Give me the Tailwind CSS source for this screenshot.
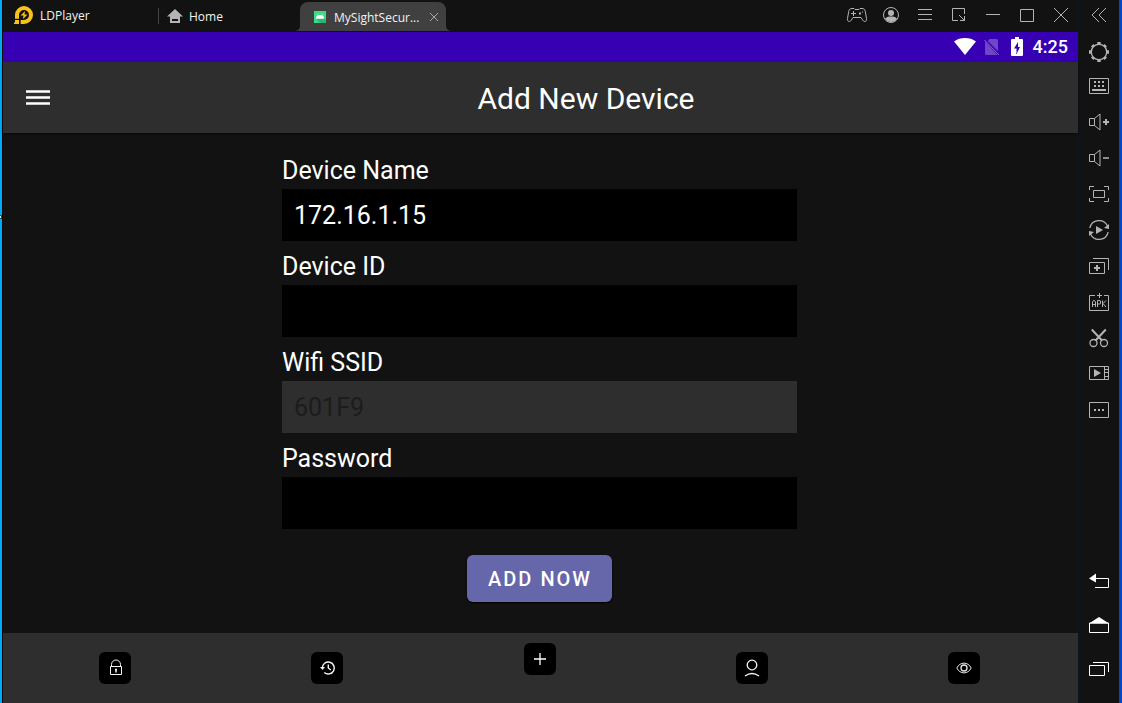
<!DOCTYPE html>
<html lang="en">
<head>
<meta charset="utf-8">
<meta name="viewport" content="width=device-width, initial-scale=1">
<title>LDPlayer</title>
<script src="https://cdn.jsdelivr.net/npm/@tailwindcss/browser@4"></script>
</head>
<body class="flex min-h-screen bg-[#121212] font-['Roboto',sans-serif] text-white">
  <!-- window edge -->
  <div class="relative w-[3px] shrink-0 border-r border-[#0a0a0a] bg-[#00aaf8]">
    <span class="absolute left-0 top-[215px] h-1 w-0.5 bg-[#0a4a6a]"></span>
    <span class="absolute left-0 top-[216px] h-0.5 w-px bg-[#fffbd0]"></span>
  </div>

  <div class="flex min-w-0 flex-1 flex-col">
    <!-- emulator title bar -->
    <header class="flex h-8 shrink-0 bg-[#121212] font-['Open_Sans',sans-serif] text-xs text-[#f2f2f2]">
      <div class="flex w-[155px] items-center gap-1.5 pl-[11px]">
        <svg class="size-5" viewBox="0 0 20 20" aria-hidden="true">
          <path d="M1 14V9a9 9 0 1 1 9 9H6.500v-4H10a5 5 0 1 0-5-5v4H1z" fill="#f9c11c"/>
          <path d="M0 16.500h5V18H0zM1 14h4v4H1z" fill="#f9c11c"/>
          <path d="M1 13.300h4M5.700 13v5" stroke="#121212" stroke-width="1.200"/>
          <path d="M11 5 6.500 9.500h3L9 13l4.500-4.500h-3z" fill="#f9c11c"/>
        </svg>
        <span>LDPlayer</span>
      </div>
      <div class="my-auto h-4 w-px bg-[#444]"></div>
      <button type="button" class="flex w-[138px] items-center gap-1.5 pl-2">
        <svg class="h-4 w-4" viewBox="0 0 16 16" aria-hidden="true"><path fill-rule="evenodd" d="M8 1 0 8.500h3V15h10V8.500h3zM5 11h6v2H5z" fill="#b4b4b4"/></svg>
        <span class="pt-0.5">Home</span>
      </button>
      <div class="relative mt-0.5 mb-px ml-[3px] flex w-[146px] items-center gap-2 rounded-t-lg bg-[#404040] pl-3.5">
        <svg class="absolute -left-[5px] bottom-0 h-[5px] w-[5px]" viewBox="0 0 5 5" aria-hidden="true"><path d="M0 5a5 5 0 0 0 5-5v5z" fill="#404040"/></svg>
        <svg class="absolute -right-[5px] bottom-0 h-[5px] w-[5px]" viewBox="0 0 5 5" aria-hidden="true"><path d="M5 5a5 5 0 0 1-5-5v5z" fill="#404040"/></svg>
        <svg class="size-3 shrink-0" viewBox="0 0 12 12" aria-hidden="true"><path d="M0 0h12v12H0z" fill="#3ddc84"/><path d="m2 7.500 4 4.500h6V9L9.500 6z" fill="#2fb56c"/><path d="M2.200 7.500a3.800 3.500 0 0 1 7.600 0zM3.500 3.500l.8 1.200M8.500 3.500l-.8 1.200" fill="#fff" stroke="#fff" stroke-width=".5"/></svg>
        <span class="w-[90px] pt-0.5 whitespace-nowrap">MySightSecur...</span>
        <button type="button" aria-label="Close tab" class="-ml-1"><svg class="size-3" viewBox="0 0 12 12"><path d="m2 2 8 8M10 2l-8 8" stroke="#a8a8a8"/></svg></button>
      </div>
      <nav class="ml-auto flex" aria-label="Window controls">
        <button type="button" aria-label="Gamepad" class="flex w-[34px] items-center justify-center"><svg class="size-6" viewBox="0 0 24 24" fill="none" stroke="#b4b4b4"><path d="M7 4.500h2l1 1h4l1-1h2c2 0 3 1 3.300 3l1.200 7c.3 2-.5 3-1.700 3-1 0-1.600-.6-2.300-1.700L16 13.500H8l-1.500 2.300c-.7 1.100-1.300 1.700-2.300 1.700-1.200 0-2-1-1.700-3l1.200-7c.3-2 1.300-3 3.300-3z"/><path d="M6 9.500h5M8.500 7v5"/><path d="M14 8.500h2v2h-2zM17 7.500h1v1h-1z" stroke="none" fill="#b4b4b4"/></svg></button>
        <button type="button" aria-label="Account" class="flex w-[34px] items-center justify-center"><svg class="size-6" viewBox="0 0 24 24"><circle cx="12" cy="11" r="7.500" fill="none" stroke="#b4b4b4"/><circle cx="12" cy="9" r="3" fill="#b4b4b4"/><path d="M6 15c1-2 3-2.500 6-2.500s5 .5 6 2.500c-1.500 2-3.500 3-6 3s-4.500-1-6-3z" fill="#b4b4b4"/></svg></button>
        <button type="button" aria-label="Menu" class="flex w-[34px] items-center justify-center"><svg class="size-6" viewBox="0 0 24 24"><path d="M5 5.500h14M5 10.500h14M5 15.500h14" stroke="#b4b4b4"/></svg></button>
        <button type="button" aria-label="Resize" class="flex w-[34px] items-center justify-center"><svg class="size-6" viewBox="0 0 24 24" fill="none" stroke="#b4b4b4"><path d="M17.500 10V4.500h-12v12H11M12 11l5.500 5.500M13 16.500h4.500V12"/></svg></button>
        <button type="button" aria-label="Minimize" class="flex w-[34px] items-center justify-center"><svg class="size-6" viewBox="0 0 24 24"><path d="M5 10.500h14" stroke="#b4b4b4"/></svg></button>
        <button type="button" aria-label="Maximize" class="flex w-[34px] items-center justify-center"><svg class="size-6" viewBox="0 0 24 24"><path d="M5.500 5.500h13v12h-13z" fill="none" stroke="#b4b4b4"/></svg></button>
        <button type="button" aria-label="Close" class="flex w-[34px] items-center justify-center"><svg class="size-6" viewBox="0 0 24 24"><path d="m5 4 14 14M19 4 5 18" stroke="#b4b4b4"/></svg></button>
      </nav>
    </header>

    <!-- Android status bar -->
    <div class="flex h-[30px] shrink-0 items-center justify-end bg-[#3700b3] pr-2.5">
      <svg class="mr-2 h-5 w-[22px]" viewBox="0 0 22 20" aria-label="Wi-Fi"><path d="M0 4.500C3 2 7 1 11 1s8 1 11 3.500L11 18z" fill="#fff"/></svg>
      <svg class="mr-3 h-5 w-[15px]" viewBox="0 0 15 20" aria-label="No SIM"><path d="M5.500 2H12.500q1.500 0 1.500 1.500V14.200L3.800 4zM1 4.200 13.500 18H2.500Q1 18 1 16.500z" fill="#6f47c6"/><path d="M.5 3 15 18" stroke="#8a69d2"/></svg>
      <svg class="mr-2.5 h-5 w-3" viewBox="0 0 12 20" aria-label="Charging"><path fill-rule="evenodd" d="M4 0h4v2h3q1 0 1 1v15q0 1-1 1H1q-1 0-1-1V3q0-1 1-1h3zM7 5l-4 6.500h2.500V17L9 10H7z" fill="#fff"/></svg>
      <span class="text-lg leading-none font-medium">4:25</span>
    </div>

    <!-- app bar -->
    <div class="z-10 flex h-[71px] shrink-0 items-center bg-[#2e2e2e] shadow-[0_1px_2px_#0a0a0a]">
      <button type="button" aria-label="Open navigation" class="flex w-[91px] pl-[23px]"><svg class="h-[18px] w-6" viewBox="0 0 24 18"><path d="M0 2.500h24M0 8.500h24M0 14.500h24" stroke="#fff" stroke-width="2.500"/></svg></button>
      <h1 class="flex-1 pt-0.5 text-center text-3xl leading-9">Add New Device</h1>
    </div>

    <main class="flex-1 pr-0.5">
      <form class="mx-auto flex w-[48%] flex-col pt-5">
        <label for="name" class="h-9 text-[25px] leading-9">Device Name</label>
        <input id="name" type="text" value="172.16.1.15" class="mb-2 h-[52px] w-full bg-black px-3 text-[25px] outline-none">
        <label for="device" class="h-9 text-[25px] leading-9">Device ID</label>
        <input id="device" type="text" class="mb-2 h-[52px] w-full bg-black px-3 text-[25px] outline-none">
        <label for="ssid" class="h-9 text-[25px] leading-9">Wifi SSID</label>
        <input id="ssid" type="text" value="601F9" disabled class="mb-2 h-[52px] w-full bg-[#2e2e2e] px-3 text-[25px] text-[#1c1c1c] outline-none">
        <label for="password" class="h-9 text-[25px] leading-9">Password</label>
        <input id="password" type="password" class="h-[52px] w-full bg-black px-3 text-[25px] outline-none">
        <button type="button" class="mt-[26px] h-[47px] self-center rounded-md bg-[#6666aa] pr-5 pl-[21px] text-xl font-medium tracking-widest shadow-[0_1px_2px_#000]">ADD NOW</button>
      </form>
    </main>

    <nav class="flex h-[70px] shrink-0 items-center justify-between bg-[#2e2e2e] pr-[98px] pl-24" aria-label="Main">
      <button type="button" aria-label="Lock" class="flex size-8 items-center justify-center rounded-md bg-black"><svg class="size-5" viewBox="0 0 20 20" fill="none" stroke="#f4f4f4"><path d="M5.500 8.500h11v8h-11zM6.500 8V6.500a4.500 4.500 0 0 1 9 0V8"/><path d="M11 11v3.500M10 11.500h2" stroke-width="1.500"/></svg></button>
      <button type="button" aria-label="History" class="flex size-8 items-center justify-center rounded-md bg-black"><svg class="size-5" viewBox="0 0 20 20" fill="none" stroke="#f4f4f4" stroke-width="1.400"><path d="M5.300 10a6 6 0 1 1 2 4.500M11.300 6.500V10l2.500 2"/><path d="M3 9h5l-2.500 3z" fill="#f4f4f4" stroke="none"/></svg></button>
      <button type="button" aria-label="Add" class="mt-2.5 flex size-8 items-center justify-center self-start rounded-md bg-black"><svg class="size-5" viewBox="0 0 20 20"><path d="M4 10h12M10 4v12" stroke="#fff" stroke-width="1.300"/></svg></button>
      <button type="button" aria-label="Profile" class="flex size-8 items-center justify-center rounded-md bg-black"><svg class="size-5" viewBox="0 0 20 20" fill="none" stroke="#f4f4f4" stroke-width="1.300"><circle cx="10" cy="7" r="4.800"/><path d="M3 18q7-5 14 0"/></svg></button>
      <button type="button" aria-label="View" class="flex size-8 items-center justify-center rounded-md bg-black"><svg class="size-5" viewBox="0 0 20 20" fill="none" stroke="#e8e8e8"><path d="M2.800 10C6 3.500 14 3.500 17.200 10 14 16.500 6 16.500 2.800 10z"/><circle cx="10" cy="10" r="3" stroke-width="1.300"/></svg></button>
    </nav>
  </div>

  <!-- emulator tool strip -->
  <aside class="flex w-[41px] shrink-0 flex-col border-l border-[#0e161f] bg-[#121212] pb-3" aria-label="Tools">
    <button type="button" aria-label="Collapse" class="flex h-8 items-center justify-center"><svg class="size-6" viewBox="0 0 24 24" fill="none" stroke="#b4b4b4"><path d="m12 4-7 7 7 7M19 4l-7 7 7 7"/></svg></button>
    <button type="button" aria-label="Settings" class="flex h-9 items-center justify-center"><svg class="size-6" viewBox="0 0 24 24" fill="none" stroke="#b4b4b4"><circle cx="12" cy="14" r="7.700" stroke-width="1.300"/><path d="M12 4v2.500M12 21.500V24M2 14h2.500M19.500 14H22M5.200 7.200l1.500 1.500M17.300 19.300l1.500 1.500M18.800 7.200l-1.500 1.500M6.700 19.300l-1.500 1.500" stroke-width="3.400"/></svg></button>
    <button type="button" aria-label="Keyboard" class="flex h-9 items-center justify-center"><svg class="size-6" viewBox="0 0 24 24" fill="none" stroke="#b4b4b4"><path d="M2.500 4.500h19v15h-19z"/><path d="M7 8h2M11 8h2M15 8h2M7 12h2M11 12h2M15 12h2M5 16h14" stroke-width="2"/></svg></button>
    <button type="button" aria-label="Volume up" class="flex h-9 items-center justify-center"><svg class="size-6" viewBox="0 0 24 24" fill="none" stroke="#b4b4b4"><path d="M7.500 8.500h-5v7h5zl5.500-4.500v16l-5.500-4.500"/><path d="M16 12h6M19 9v6" stroke-width="2"/></svg></button>
    <button type="button" aria-label="Volume down" class="flex h-9 items-center justify-center"><svg class="size-6" viewBox="0 0 24 24" fill="none" stroke="#b4b4b4"><path d="M7.500 8.500h-5v7h5zl5.500-4.500v16l-5.500-4.500"/><path d="M16 12h6" stroke-width="1.500"/></svg></button>
    <button type="button" aria-label="Full screen" class="flex h-9 items-center justify-center"><svg class="size-6" viewBox="0 0 24 24" fill="none" stroke="#b4b4b4"><path d="M6.500 8.500h11v7h-11zM7 4.500H2.500V8M17 4.500h4.500V8M7 19.500H2.500V16M17 19.500h4.500V16"/></svg></button>
    <button type="button" aria-label="Operation recorder" class="flex h-9 items-center justify-center"><svg class="size-6" viewBox="0 0 24 24" fill="none" stroke="#b4b4b4" stroke-width="1.200"><path d="M2.800 10a9.400 9.400 0 0 1 17.700-2M21.200 14a9.400 9.400 0 0 1-17.700 2"/><path d="m9 8 7 4-7 4zM22 6v5l-5-1zM2 18v-5l5 1z" fill="#b4b4b4" stroke="none"/></svg></button>
    <button type="button" aria-label="Multi instance" class="flex h-9 items-center justify-center"><svg class="size-6" viewBox="0 0 24 24" fill="none" stroke="#b4b4b4"><path d="M2.500 8.500h15v11h-15zM6 4.500h15.500V16"/><path d="M7 14h6M10 11v6" stroke-width="2"/></svg></button>
    <button type="button" aria-label="Install APK" class="flex h-9 items-center justify-center"><svg class="size-6" viewBox="0 0 24 24" fill="none" stroke="#b4b4b4"><path d="M8 5.500H2.500v15h19v-15H17M10 5.500h5M12.500 3v5"/><path d="M5.500 17v-5l1-1.500h1l1 1.500v5M5.500 14.500h3M10.500 17v-6.500h2.500l.5.500v2.500l-.5.500h-2.500M15.500 10.500V17M19 10.500l-3 3 3 3.500"/></svg></button>
    <button type="button" aria-label="Screenshot" class="flex h-9 items-center justify-center"><svg class="size-6" viewBox="0 0 24 24" fill="none" stroke="#b4b4b4"><circle cx="6.500" cy="17" r="3.500" stroke-width="1.300"/><circle cx="17" cy="17" r="3.500" stroke-width="1.300"/><path d="M4.800 3.500 15 14.500M18.800 3.500 8.500 14.500" stroke-width="2"/></svg></button>
    <button type="button" aria-label="Video recorder" class="flex h-9 items-center justify-center"><svg class="size-6" viewBox="0 0 24 24" fill="none" stroke="#b4b4b4"><path d="M2.500 4.500h19v13h-19zM17.500 4.500v13M18 7.500h4M18 10.500h4M18 14.500h4"/><path d="m7 7 7 4-7 4z" fill="#b4b4b4" stroke="none"/></svg></button>
    <button type="button" aria-label="More" class="flex h-9 items-center justify-center"><svg class="size-6" viewBox="0 0 24 24" fill="none" stroke="#b4b4b4"><path d="M2.500 4.500h19v15h-19z"/><path d="M7 12h2M11 12h2M15 12h2" stroke-width="2"/></svg></button>
    <button type="button" aria-label="Back" class="mt-auto flex h-11 items-center justify-center"><svg class="size-6" viewBox="0 0 24 24" fill="none" stroke="#fff"><path d="M8 9.500h13.500v9H8"/><path d="m2 9.500 7-5v9z" fill="#fff" stroke="none"/></svg></button>
    <button type="button" aria-label="Home screen" class="flex h-11 items-center justify-center"><svg class="size-6" viewBox="0 0 24 24" fill="none" stroke="#fff"><path d="M2.500 10v9.500h19V10z"/><path d="M2 10.500 12 4l10 6.500z" fill="#fff" stroke="none"/></svg></button>
    <button type="button" aria-label="Recent apps" class="flex h-11 items-center justify-center"><svg class="size-6" viewBox="0 0 24 24" fill="none" stroke="#fff"><path d="M2.500 8.500h15v10h-15zM6 5.500h15.500V15"/></svg></button>
  </aside>
  <div class="w-[3px] shrink-0 bg-[#0047cc]"></div>
</body>
</html>
